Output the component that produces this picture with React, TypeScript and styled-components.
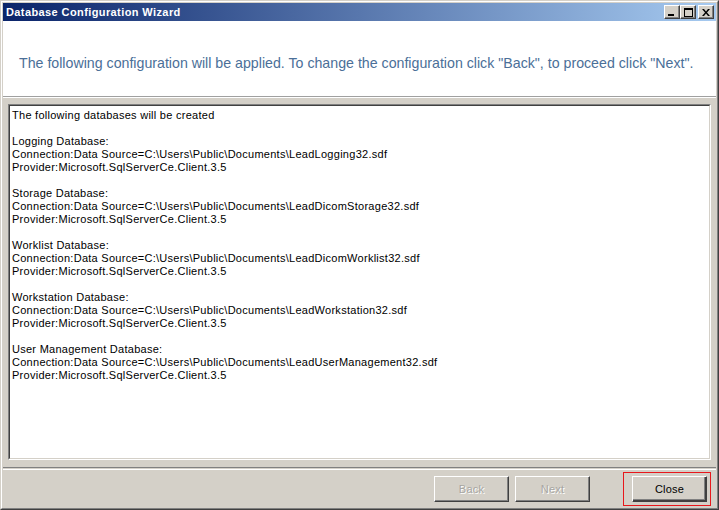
import React from "react";
import styled, { createGlobalStyle } from "styled-components";

const Global = createGlobalStyle`
  html, body { margin: 0; padding: 0; background: #d4d0c8; }
  body { width: 719px; height: 510px; overflow: hidden; }
`;

const WindowFrame = styled.div`
  box-sizing: border-box;
  width: 719px;
  height: 510px;
  border: 1px solid;
  border-color: #d4d0c8 #404040 #404040 #d4d0c8;
  background: #d4d0c8;
`;

const WindowInner = styled.div`
  box-sizing: border-box;
  height: 100%;
  border: 1px solid;
  border-color: #ffffff #808080 #808080 #ffffff;
  padding: 1px;
  display: flex;
  flex-direction: column;
`;

const TitleBar = styled.div`
  height: 18px;
  flex: none;
  display: flex;
  align-items: center;
  justify-content: space-between;
  background: linear-gradient(to right, #0a246a, #a6caf0);
  padding: 0 2px 0 3px;
`;

const TitleText = styled.div`
  color: #ffffff;
  font-family: "Liberation Sans", Arial, sans-serif;
  font-weight: bold;
  font-size: 11px;
  letter-spacing: 0.4px;
  line-height: 14px;
`;

const CaptionButtons = styled.div`
  display: flex;
  align-items: center;
`;

const CaptionButton = styled.div<{ $gap?: number }>`
  box-sizing: border-box;
  width: 16px;
  height: 14px;
  margin-left: ${(p) => p.$gap ?? 0}px;
  background: #d4d0c8;
  border: 1px solid;
  border-color: #ffffff #404040 #404040 #ffffff;
  box-shadow: inset -1px -1px 0 #808080;
  display: flex;
  align-items: center;
  justify-content: center;
  svg { display: block; }
`;

const Header = styled.div`
  box-sizing: border-box;
  height: 76px;
  flex: none;
  background: #ffffff;
  padding: 34px 0 0 16px;
  border-bottom: 1px solid #a0a0a0;
`;

const HeaderText = styled.div`
  color: #4b6f98;
  font-family: "Liberation Sans", Arial, sans-serif;
  font-size: 14.2px;
  line-height: 17px;
  white-space: nowrap;
`;

const HeaderHighlight = styled.div`
  height: 1px;
  background: #ffffff;
  flex: none;
`;

const Body = styled.div`
  flex: 1;
  display: flex;
  flex-direction: column;
  padding: 6px 5px 0 5px;
`;

const TextArea = styled.div`
  box-sizing: border-box;
  height: 356px;
  flex: none;
  border: 1px solid;
  border-color: #808080 #ffffff #ffffff #808080;
`;

const TextAreaInner = styled.div`
  box-sizing: border-box;
  height: 100%;
  border: 1px solid;
  border-color: #404040 #d4d0c8 #d4d0c8 #404040;
  background: #ffffff;
  padding: 3px 0 0 2px;
  font-family: "Liberation Sans", Arial, sans-serif;
  font-size: 11px;
  letter-spacing: 0.27px;
  line-height: 13px;
  color: #000000;
`;

const Line = styled.div`
  min-height: 13px;
  white-space: nowrap;
`;

const Separator = styled.div`
  margin: 7px -5px 0 -5px;
  height: 1px;
  border-top: 1px solid #808080;
  border-bottom: 1px solid #ffffff;
  flex: none;
`;

const ButtonRow = styled.div`
  display: flex;
  align-items: center;
  justify-content: flex-end;
  margin-top: 2px;
`;

const NavGroup = styled.div`
  display: flex;
  gap: 6px;
  margin-right: 33px;
`;

const Button = styled.button<{ $disabled?: boolean; $default?: boolean }>`
  box-sizing: border-box;
  width: 75px;
  height: 26px;
  padding: 0;
  margin: 0;
  background: #d4d0c8;
  border: 1px solid;
  border-color: #ffffff #404040 #404040 #ffffff;
  box-shadow: ${(p) =>
    p.$default ? "inset -1px -1px 0 #404040, inset -2px -2px 0 #808080" : "inset -1px -1px 0 #808080"};
  font-family: "Liberation Sans", Arial, sans-serif;
  font-size: 11px;
  letter-spacing: 0.2px;
  color: ${(p) => (p.$disabled ? "#a7a6a2" : "#000000")};
  text-shadow: ${(p) => (p.$disabled ? "1px 1px 0 #ffffff" : "none")};
  cursor: default;
`;

const Highlight = styled.div`
  border: 1px solid #e8171b;
  padding: 3px 3px 3px 8px;
`;

const lines = [
  "The following databases will be created",
  "",
  "Logging Database:",
  "Connection:Data Source=C:\\Users\\Public\\Documents\\LeadLogging32.sdf",
  "Provider:Microsoft.SqlServerCe.Client.3.5",
  "",
  "Storage Database:",
  "Connection:Data Source=C:\\Users\\Public\\Documents\\LeadDicomStorage32.sdf",
  "Provider:Microsoft.SqlServerCe.Client.3.5",
  "",
  "Worklist Database:",
  "Connection:Data Source=C:\\Users\\Public\\Documents\\LeadDicomWorklist32.sdf",
  "Provider:Microsoft.SqlServerCe.Client.3.5",
  "",
  "Workstation Database:",
  "Connection:Data Source=C:\\Users\\Public\\Documents\\LeadWorkstation32.sdf",
  "Provider:Microsoft.SqlServerCe.Client.3.5",
  "",
  "User Management Database:",
  "Connection:Data Source=C:\\Users\\Public\\Documents\\LeadUserManagement32.sdf",
  "Provider:Microsoft.SqlServerCe.Client.3.5",
];

export default function App() {
  return (
    <>
      <Global />
      <WindowFrame>
        <WindowInner>
          <TitleBar>
            <TitleText>Database Configuration Wizard</TitleText>
            <CaptionButtons>
              <CaptionButton>
                <svg width="8" height="8" viewBox="0 0 8 8">
                  <rect x="0" y="6" width="6" height="2" fill="#000" />
                </svg>
              </CaptionButton>
              <CaptionButton>
                <svg width="9" height="9" viewBox="0 0 9 9">
                  <rect x="0.5" y="0.5" width="8" height="8" fill="none" stroke="#000" />
                  <rect x="0" y="0" width="9" height="2" fill="#000" />
                </svg>
              </CaptionButton>
              <CaptionButton $gap={2}>
                <svg width="8" height="7" viewBox="0 0 8 7">
                  <path d="M0 0h2l2 2.5L6 0h2L5 3.5 8 7H6L4 4.5 2 7H0l3-3.5z" fill="#000" />
                </svg>
              </CaptionButton>
            </CaptionButtons>
          </TitleBar>
          <Header>
            <HeaderText>
              The following configuration will be applied. To change the configuration click "Back", to proceed click "Next".
            </HeaderText>
          </Header>
          <HeaderHighlight />
          <Body>
            <TextArea>
              <TextAreaInner>
                {lines.map((l, i) => (
                  <Line key={i}>{l}</Line>
                ))}
              </TextAreaInner>
            </TextArea>
            <Separator />
            <ButtonRow>
              <NavGroup>
                <Button $disabled>Back</Button>
                <Button $disabled>Next</Button>
              </NavGroup>
              <Highlight>
                <Button $default>Close</Button>
              </Highlight>
            </ButtonRow>
          </Body>
        </WindowInner>
      </WindowFrame>
    </>
  );
}
